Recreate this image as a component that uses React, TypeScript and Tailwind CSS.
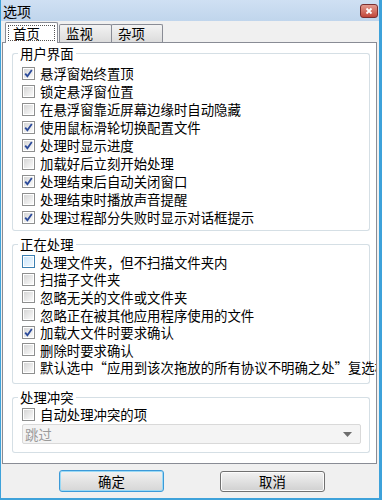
import clsx from "clsx";

const userUi = [
  { label: "悬浮窗始终置顶", checked: true },
  { label: "锁定悬浮窗位置", checked: false },
  { label: "在悬浮窗靠近屏幕边缘时自动隐藏", checked: false },
  { label: "使用鼠标滑轮切换配置文件", checked: true },
  { label: "处理时显示进度", checked: true },
  { label: "加载好后立刻开始处理", checked: false },
  { label: "处理结束后自动关闭窗口", checked: true },
  { label: "处理结束时播放声音提醒", checked: false },
  { label: "处理过程部分失败时显示对话框提示", checked: true },
];

const processing = [
  { label: "处理文件夹，但不扫描文件夹内", checked: false, hot: true },
  { label: "扫描子文件夹", checked: false },
  { label: "忽略无关的文件或文件夹", checked: false },
  { label: "忽略正在被其他应用程序使用的文件", checked: false },
  { label: "加载大文件时要求确认", checked: true },
  { label: "删除时要求确认", checked: false },
  { label: "默认选中“应用到该次拖放的所有协议不明确之处”复选框", checked: false },
];

function CheckBox({ checked, hot }: { checked?: boolean; hot?: boolean }) {
  return (
    <span
      className={clsx(
        "w-[13px] h-[13px] border p-[1px] shrink-0 flex",
        hot ? "border-[#3c7fb1]" : "border-[#8e8f8f]"
      )}
    >
      <span
        className={clsx(
          "flex-1 flex items-center justify-center bg-gradient-to-br",
          hot ? "from-[#cde6fb] to-[#eef7fe]" : "from-[#d6d6d6] to-[#fafafa]"
        )}
      >
        {checked && (
          <svg width="11" height="11" viewBox="0 0 11 11" className="-m-[1px]">
            <path d="M2.2 5.6 L4.4 8.2 L8.8 2" fill="none" stroke="#2b4a9a" strokeWidth="1.8" />
          </svg>
        )}
      </span>
    </span>
  );
}

function Row({ label, checked, hot, h }: { label: string; checked?: boolean; hot?: boolean; h: string }) {
  return (
    <div className={clsx("flex items-center gap-[5px] whitespace-nowrap", h)}>
      <CheckBox checked={checked} hot={hot} />
      <span className="leading-[16px]">{label}</span>
    </div>
  );
}

function Group({ title, className, children }: { title: string; className?: string; children: React.ReactNode }) {
  return (
    <div>
      {/* header line with the title on the border */}
      <div className="flex items-end h-[16px]">
        <div className="w-[6px] h-[8px] border-l border-t border-[#d5dfe5] rounded-tl-[3px]" />
        <span className="px-[2px] leading-[16px] self-start">{title}</span>
        <div className="flex-1 h-[8px] border-r border-t border-[#d5dfe5] rounded-tr-[3px]" />
      </div>
      <div className={clsx("border-x border-b border-[#d5dfe5] rounded-b-[3px] pl-[9px]", className)}>
        {children}
      </div>
    </div>
  );
}

export default function App() {
  return (
    <div className="w-[382px] h-[500px] flex flex-col bg-[#f0f0f0] border-l border-r-[3px] border-b-[2px] border-[#3ea2da] text-[13.4px] leading-[16px] text-black font-['Noto_Sans_CJK_SC',sans-serif] overflow-hidden">
      {/* Title bar */}
      <div className="h-[21px] shrink-0 flex items-center justify-between pl-[2px] pr-[1px] bg-gradient-to-b from-[#cfe0f3] to-[#c0d5ec]">
        <span className="leading-[16px] text-[14px]">选项</span>
        <div className="w-[18px] h-[14px] rounded-[3px] border border-[#7a2f2f] bg-gradient-to-b from-[#e29a8f] to-[#c1453a] flex items-center justify-center">
          <svg width="8" height="8" viewBox="0 0 8 8">
            <path d="M1.5 1.5 L6.5 6.5 M6.5 1.5 L1.5 6.5" stroke="#fff" strokeWidth="1.8" />
          </svg>
        </div>
      </div>

      <div className="flex-1 flex flex-col pl-[1px] pr-[2px] pt-[1px]">
        {/* Tabs */}
        <div className="flex items-end h-[20px] pl-[3px]">
          <div className="relative h-[21px] w-[53px] -mb-[1px] bg-white border-x border-t border-[#898c95] rounded-t-[2px] px-[2px] pt-[2px]">
            <div className="h-[16px] border border-dotted border-[#555] flex items-center pl-[4px] leading-[14px]">首页</div>
          </div>
          <div className="h-[18px] w-[53px] ml-[1px] bg-gradient-to-b from-[#f3f3f3] to-[#dcdcdc] border-x border-t border-[#898c95] rounded-t-[2px] pl-[6px] leading-[16px]">
            监视
          </div>
          <div className="h-[18px] w-[52px] -ml-[1px] bg-gradient-to-b from-[#f3f3f3] to-[#dcdcdc] border-x border-t border-[#898c95] rounded-t-[2px] pl-[6px] leading-[16px]">
            杂项
          </div>
        </div>

        {/* Panel */}
        <div className="h-[422px] bg-white border border-[#898c95] pt-[2px] pl-[9px] pr-[6px] flex flex-col overflow-hidden">
          <Group title="用户界面" className="pt-[3px] pb-[4px]">
            {userUi.map((it) => (
              <Row key={it.label} {...it} h="h-[18px]" />
            ))}
          </Group>

          <div className="mt-[5px]">
            <Group title="正在处理" className="pt-[1px] pb-[7px]">
              {processing.map((it) => (
                <Row key={it.label} {...it} h="h-[17.6px]" />
              ))}
            </Group>
          </div>

          <div className="mt-[5px]">
            <Group title="处理冲突" className="pb-[8px] pr-[8px]">
              <Row label="自动处理冲突的项" h="h-[18px]" />
              <div className="mt-[1px] h-[20px] border border-[#d9d9d9] rounded-[2px] bg-[#f4f4f4] flex items-center justify-between pl-[2px] pr-[8px] text-[#9b9b9b]">
                <span className="leading-[16px]">跳过</span>
                <svg width="9" height="5" viewBox="0 0 9 5">
                  <path d="M0 0 H9 L4.5 5 Z" fill="#6d6d6d" />
                </svg>
              </div>
            </Group>
          </div>
        </div>

        {/* Buttons */}
        <div className="flex-1 flex items-center pl-[57px] gap-[56px]">
          <button className="w-[105px] h-[22px] rounded-[3px] border border-[#3c9ad8] bg-gradient-to-b from-[#f2f2f2] to-[#d6d6d6] shadow-[inset_0_0_0_1px_#9ad9f5] leading-[16px]">
            确定
          </button>
          <button className="w-[105px] h-[21px] rounded-[3px] border border-[#707070] bg-gradient-to-b from-[#f2f2f2] to-[#d0d0d0] shadow-[inset_0_0_0_1px_#fcfcfc] leading-[16px]">
            取消
          </button>
        </div>
      </div>
    </div>
  );
}
